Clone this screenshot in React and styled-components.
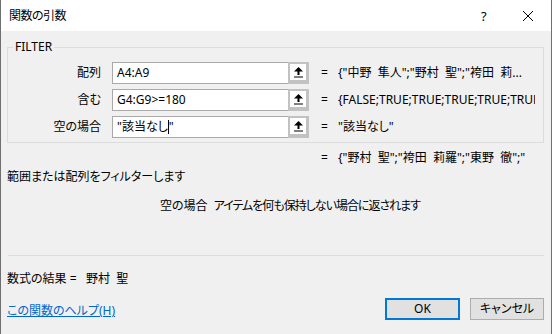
import React from "react";
import styled, { createGlobalStyle } from "styled-components";

const Global = createGlobalStyle`
  html, body { margin: 0; padding: 0; background: #f0f0f0; }
  body {
    font-family: "Noto Sans", "Noto Sans CJK JP", sans-serif;
    font-size: 12px;
    color: #000;
    font-feature-settings: "palt";
  }
  * { box-sizing: border-box; }
`;

const Dialog = styled.div`
  width: 552px;
  height: 334px;
  display: flex;
  flex-direction: column;
  background: #f0f0f0;
  border-left: 1px solid #6f6f6f;
  border-right: 1px solid #6f6f6f;
  overflow: hidden;
`;

const TitleBar = styled.div`
  height: 31px;
  flex: none;
  background: #fff;
  display: flex;
  align-items: center;
  padding-left: 8px;
  line-height: 16px;
`;

const Title = styled.div`
  flex: 1;
  font-size: 12px;
  letter-spacing: -0.5px;
`;

const HelpGlyph = styled.div`
  width: 10px;
  font-size: 13px;
  margin-right: 31px;
`;

const CloseBox = styled.div`
  width: 12px;
  height: 12px;
  margin-right: 17px;
  display: flex;
`;

const Body = styled.div`
  flex: 1;
  display: flex;
  flex-direction: column;
  padding: 0 7px 0 6px;
  line-height: 16px;
`;

const Group = styled.div`
  position: relative;
  margin-top: 16px;
  border: 1px solid #dcdcdc;
  padding: 14px 0 4px 0;
  display: flex;
  flex-direction: column;
  gap: 5px;
`;

const Legend = styled.div`
  position: absolute;
  top: -9px;
  left: 5px;
  padding: 0 2px;
  background: #f0f0f0;
  line-height: 16px;
`;

const ArgRow = styled.div`
  display: flex;
  align-items: center;
  height: 22px;
`;

const ArgLabel = styled.div`
  width: 93px;
  text-align: right;
  margin-right: 11px;
`;

const InputBox = styled.div`
  width: 176px;
  height: 22px;
  border: 1px solid #a9a9a9;
  border-right: none;
  background: #fff;
  padding-left: 4px;
  display: flex;
  align-items: center;
  white-space: pre;
  overflow: hidden;
`;

const Caret = styled.span`
  display: inline-block;
  width: 1px;
  height: 14px;
  background: #000;
  vertical-align: middle;
`;

const RefButton = styled.div`
  width: 21px;
  height: 22px;
  background: #c2c2c2;
  padding: 2px 3px 4px 2px;
  display: flex;
`;

const RefFace = styled.div`
  flex: 1;
  background: #fff;
  display: flex;
  align-items: center;
  justify-content: center;
`;

const Eq = styled.div`
  margin-left: ${(p) => p.$offset || 12}px;
  width: 6px;
  margin-right: 11px;
`;

const Value = styled.div`
  width: 197px;
  white-space: pre;
  overflow: hidden;
`;

const ResultLine = styled.div`
  display: flex;
  margin-top: 7px;
`;

const Description = styled.div`
  margin-top: 3px;
`;

const ArgHelp = styled.div`
  display: flex;
  margin-top: 13px;
  padding-left: 153px;
`;

const ArgHelpName = styled.span`
  margin-right: 6px;
`;

const ArgHelpText = styled.span`
  letter-spacing: -1px;
`;

const Separator = styled.div`
  height: 1px;
  background: #dcdcdc;
  margin-top: 41px;
  margin-left: 1px;
`;

const FormulaResult = styled.div`
  margin-top: 15px;
  white-space: pre;
`;

const Footer = styled.div`
  display: flex;
  align-items: center;
  margin-top: 11px;
`;

const HelpLink = styled.a`
  flex: 1;
  color: #0066cc;
  text-decoration: underline;
  margin-top: 4px;
  cursor: pointer;
`;

const Button = styled.div`
  width: ${(p) => (p.$primary ? 75 : 74)}px;
  height: 22px;
  margin-left: ${(p) => (p.$primary ? 0 : 10)}px;
  background: #e1e1e1;
  border: ${(p) => (p.$primary ? "2px solid #0078d7" : "1px solid #adadad")};
  display: flex;
  align-items: center;
  justify-content: center;
`;

const RefIcon = () => (
  <svg width="9" height="11" viewBox="0 0 9 11">
    <polygon points="4.5,0 9,4.5 0,4.5" fill="#000" />
    <rect x="3.5" y="4" width="2" height="4" fill="#000" />
    <rect x="0" y="9.5" width="9" height="1" fill="#000" />
  </svg>
);

const CloseIcon = () => (
  <svg width="12" height="12" viewBox="0 0 12 12">
    <path d="M1 1 L11 11 M11 1 L1 11" stroke="#000" strokeWidth="1" fill="none" />
  </svg>
);

const args = [
  { label: "配列", input: "A4:A9", value: '{"中野  隼人";"野村  聖";"袴田  莉...' },
  { label: "含む", input: "G4:G9>=180", value: "{FALSE;TRUE;TRUE;TRUE;TRUE;TRUE}" },
  { label: "空の場合", input: '"該当なし', caret: true, tail: '"', value: '"該当なし"' },
];

export default function App() {
  return (
    <>
      <Global />
      <Dialog>
        <TitleBar>
          <Title>関数の引数</Title>
          <HelpGlyph>?</HelpGlyph>
          <CloseBox>
            <CloseIcon />
          </CloseBox>
        </TitleBar>
        <Body>
          <Group>
            <Legend>FILTER</Legend>
            {args.map((a) => (
              <ArgRow key={a.label}>
                <ArgLabel>{a.label}</ArgLabel>
                <InputBox>
                  {a.input}
                  {a.caret && <Caret />}
                  {a.tail}
                </InputBox>
                <RefButton>
                  <RefFace>
                    <RefIcon />
                  </RefFace>
                </RefButton>
                <Eq>=</Eq>
                <Value>{a.value}</Value>
              </ArgRow>
            ))}
          </Group>
          <ResultLine>
            <Eq $offset={314}>=</Eq>
            <Value>{'{"野村  聖";"袴田  莉羅";"東野  徹";"'}</Value>
          </ResultLine>
          <Description>範囲または配列をフィルターします</Description>
          <ArgHelp>
            <ArgHelpName>空の場合</ArgHelpName>
            <ArgHelpText>アイテムを何も保持しない場合に返されます</ArgHelpText>
          </ArgHelp>
          <Separator />
          <FormulaResult>{"数式の結果 =   野村  聖"}</FormulaResult>
          <Footer>
            <HelpLink>この関数のヘルプ(H)</HelpLink>
            <Button $primary>OK</Button>
            <Button>キャンセル</Button>
          </Footer>
        </Body>
      </Dialog>
    </>
  );
}
